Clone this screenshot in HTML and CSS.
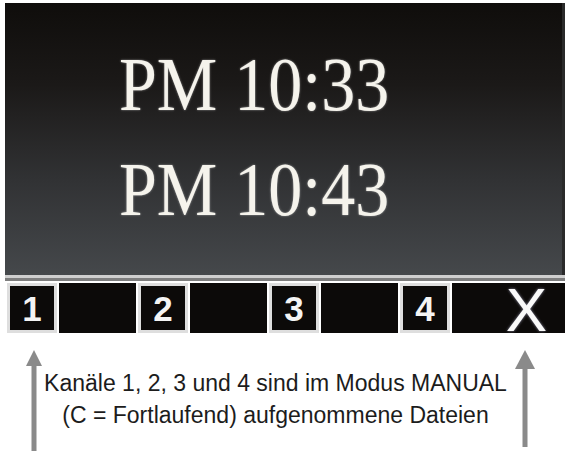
FILE: index.html
```html
<!DOCTYPE html>
<html lang="de">
<head>
<meta charset="utf-8">
<title>Wiedergabe</title>
<link rel="stylesheet" href="styles.css">
</head>
<body>
<div class="page">
  <div class="screen">
    <div class="time time-first">PM 10:33</div>
    <div class="time">PM 10:43</div>
  </div>
  <div class="sep-light"></div>
  <div class="sep-dark"></div>
  <div class="bar">
    <div class="ch"><span>1</span></div>
    <div class="seg"></div>
    <div class="ch"><span>2</span></div>
    <div class="seg"></div>
    <div class="ch"><span>3</span></div>
    <div class="seg"></div>
    <div class="ch"><span>4</span></div>
    <div class="seg seg-last"><span class="x">X</span></div>
  </div>
  <div class="notes">
    <svg class="arrow arrow-left" width="16" height="101" viewBox="0 0 16 101">
      <polygon points="8,0 16,16 0,16" fill="#8a8a8a"/>
      <rect x="5.5" y="15" width="5" height="86" fill="#8a8a8a"/>
    </svg>
    <div class="caption">
      <p>Kanäle 1, 2, 3 und 4 sind im Modus MANUAL</p>
      <p>(C = Fortlaufend) aufgenommene Dateien</p>
    </div>
    <svg class="arrow arrow-right" width="20" height="97" viewBox="0 0 20 97">
      <polygon points="10,0 20,19 0,19" fill="#8a8a8a"/>
      <rect x="7.5" y="18" width="5" height="79" fill="#8a8a8a"/>
    </svg>
  </div>
</div>
</body>
</html>
```
FILE: styles.css
```css
* { box-sizing: border-box; }
html, body { margin: 0; padding: 0; background: #ffffff; }
.page {
  width: 570px;
  height: 451px;
  overflow: hidden;
  background: #ffffff;
  padding-top: 3px;
}
.screen {
  margin: 0 5px;
  height: 272px;
  background: linear-gradient(to bottom, #0f0d0b 0%, #1b1918 30%, #313234 65%, #45484b 100%);
  padding: 47px 0 0 114px;
  display: flex;
  flex-direction: column;
  gap: 37px;
  border-right: 3px solid #2a2a2a;
}
.time {
  font-family: "Liberation Serif", "Times New Roman", serif;
  font-size: 68px;
  line-height: 68px;
  height: 68px;
  color: #f5f3ec;
  text-shadow: 0 0 2px rgba(255,255,255,0.55);
  transform: scaleY(1.13);
  white-space: nowrap;
}
.sep-light { margin: 0 5px; height: 3px; background: #cfcfcf; }
.sep-dark { margin: 0 5px; height: 3px; background: #7e7e7e; }
.bar {
  margin: 2px 5px 0 7px;
  height: 50px;
  display: flex;
  gap: 2px;
  background: #ffffff;
}
.ch {
  width: 50px;
  flex: none;
  border: 3px solid #dedede;
  background: #0c0a09;
  display: flex;
  align-items: center;
  justify-content: center;
  color: #f4f4f4;
  font-family: "Liberation Sans", Arial, sans-serif;
  font-weight: bold;
  font-size: 35px;
  line-height: 1;
}
.seg {
  width: 77px;
  flex: none;
  background: #0c0a09;
}
.seg-last {
  flex: 1;
  display: flex;
  justify-content: flex-end;
  padding-right: 18px;
}
.x {
  font-family: "Liberation Sans", Arial, sans-serif;
  font-size: 62px;
  line-height: 50px;
  padding-top: 2px;
  color: #fafafa;
  text-shadow: 0 0 3px rgba(220,220,255,0.6);
}
.notes {
  margin-top: 17px;
  height: 101px;
  display: flex;
  align-items: flex-start;
  padding: 0 35px 0 26px;
}
.arrow { flex: none; display: block; }
.caption {
  flex: 1;
  padding: 17px 6px 0 0;
  text-align: center;
  font-family: "Liberation Sans", Arial, sans-serif;
  font-size: 23px;
  line-height: 32px;
  color: #1c1c1c;
}
.caption p { margin: 0; white-space: nowrap; }
```
